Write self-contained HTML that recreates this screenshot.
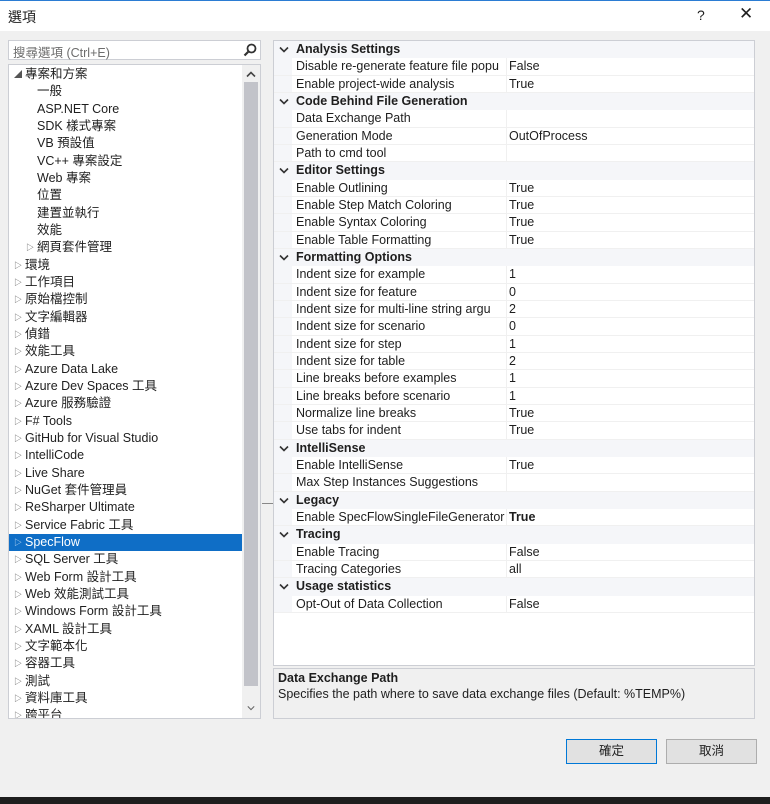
<!DOCTYPE html>
<html><head><meta charset="utf-8"><style>
*{margin:0;padding:0;box-sizing:border-box}
body{width:770px;height:804px;background:#f0f0f0;font-family:"Liberation Sans","Noto Sans CJK TC",sans-serif;font-size:12.5px;color:#1e1e1e;position:relative;overflow:hidden}
.a{position:absolute;white-space:nowrap}
#title{left:0;top:0;width:770px;height:31px;background:#fff;border-top:1px solid #2b7cd3}
#search{left:8px;top:40px;width:253px;height:20px;background:#fff;border:1px solid #ccced4}
#tree{left:8px;top:64px;width:253px;height:655px;background:#fff;border:1px solid #ccced4;overflow:hidden}
.tr{position:absolute;left:0;height:17px;line-height:17px;width:234px;white-space:nowrap}
.tr.sel{background:#0f6ec6;color:#fff}
.ar{position:absolute;left:5px;top:0;font-size:8px;color:#555}
.sel .ar{color:#cfe3f7}
#sb{left:242px;top:65px;width:18px;height:653px;background:#f0f0f0}
#thumb{left:244px;top:82px;width:14px;height:604px;background:#c2c3c9}
#grid{left:273px;top:40px;width:482px;height:626px;background:#fff;border:1px solid #ccced4;overflow:hidden}
.gr{position:absolute;left:0;width:480px;height:17.34px;line-height:17px}
.gr.cat{background:#f5f6f9;font-weight:bold}
.gr .n{position:absolute;left:22px}
.gr .v{position:absolute;left:232px;border-left:1px solid #f0f0f0;padding-left:2px;height:17px;width:248px}
.gr:not(.cat){border-bottom:1px solid #f0f0f0}
.gut{position:absolute;left:0;top:0;width:18px;height:100%;background:#f5f6f9}
.chev{position:absolute;left:5px;top:5px;width:10px;height:7px}
#desc{left:273px;top:668px;width:482px;height:51px;border:1px solid #ccced4;background:#f0f0f0;padding:2px 4px}
.btn{position:absolute;top:739px;width:91px;height:25px;border:1px solid #adadad;background:#e1e1e1;text-align:center;line-height:23px}
</style></head><body>
<svg width="0" height="0" style="position:absolute"><defs><symbol id="cv" viewBox="0 0 10 7"><path d="M1 1.5L5 5.5L9 1.5" fill="none" stroke="#333" stroke-width="1.6"/></symbol></defs></svg>
<div id="title" class="a"><span class="a" style="left:8px;top:6px;font-size:14px">選項</span><span class="a" style="left:697px;top:6px;font-size:14px">?</span><span class="a" style="left:739px;top:3px;font-size:17px">✕</span></div>
<div id="search" class="a"><span class="a" style="left:4px;top:1px;color:#6d6d6d">搜尋選項 (Ctrl+E)</span>
<svg class="a" style="left:234px;top:2px" width="14" height="14" viewBox="0 0 14 14"><circle cx="8.5" cy="5.5" r="4" fill="none" stroke="#333" stroke-width="1.8"/><path d="M5.5 8.5L1.5 12.5" stroke="#333" stroke-width="2.2"/></svg></div>
<div id="tree" class="a">
<div class="tr" style="top:1px"><span class="ar">◢</span><span style="position:absolute;left:16px">專案和方案</span></div>
<div class="tr" style="top:18px"><span style="position:absolute;left:28px">一般</span></div>
<div class="tr" style="top:36px"><span style="position:absolute;left:28px">ASP.NET Core</span></div>
<div class="tr" style="top:53px"><span style="position:absolute;left:28px">SDK 樣式專案</span></div>
<div class="tr" style="top:70px"><span style="position:absolute;left:28px">VB 預設值</span></div>
<div class="tr" style="top:88px"><span style="position:absolute;left:28px">VC++ 專案設定</span></div>
<div class="tr" style="top:105px"><span style="position:absolute;left:28px">Web 專案</span></div>
<div class="tr" style="top:122px"><span style="position:absolute;left:28px">位置</span></div>
<div class="tr" style="top:140px"><span style="position:absolute;left:28px">建置並執行</span></div>
<div class="tr" style="top:157px"><span style="position:absolute;left:28px">效能</span></div>
<div class="tr" style="top:174px"><span class="ar" style="left:17px">▷</span><span style="position:absolute;left:28px">網頁套件管理</span></div>
<div class="tr" style="top:192px"><span class="ar">▷</span><span style="position:absolute;left:16px">環境</span></div>
<div class="tr" style="top:209px"><span class="ar">▷</span><span style="position:absolute;left:16px">工作項目</span></div>
<div class="tr" style="top:226px"><span class="ar">▷</span><span style="position:absolute;left:16px">原始檔控制</span></div>
<div class="tr" style="top:244px"><span class="ar">▷</span><span style="position:absolute;left:16px">文字編輯器</span></div>
<div class="tr" style="top:261px"><span class="ar">▷</span><span style="position:absolute;left:16px">偵錯</span></div>
<div class="tr" style="top:278px"><span class="ar">▷</span><span style="position:absolute;left:16px">效能工具</span></div>
<div class="tr" style="top:296px"><span class="ar">▷</span><span style="position:absolute;left:16px">Azure Data Lake</span></div>
<div class="tr" style="top:313px"><span class="ar">▷</span><span style="position:absolute;left:16px">Azure Dev Spaces 工具</span></div>
<div class="tr" style="top:330px"><span class="ar">▷</span><span style="position:absolute;left:16px">Azure 服務驗證</span></div>
<div class="tr" style="top:348px"><span class="ar">▷</span><span style="position:absolute;left:16px">F# Tools</span></div>
<div class="tr" style="top:365px"><span class="ar">▷</span><span style="position:absolute;left:16px">GitHub for Visual Studio</span></div>
<div class="tr" style="top:382px"><span class="ar">▷</span><span style="position:absolute;left:16px">IntelliCode</span></div>
<div class="tr" style="top:400px"><span class="ar">▷</span><span style="position:absolute;left:16px">Live Share</span></div>
<div class="tr" style="top:417px"><span class="ar">▷</span><span style="position:absolute;left:16px">NuGet 套件管理員</span></div>
<div class="tr" style="top:434px"><span class="ar">▷</span><span style="position:absolute;left:16px">ReSharper Ultimate</span></div>
<div class="tr" style="top:452px"><span class="ar">▷</span><span style="position:absolute;left:16px">Service Fabric 工具</span></div>
<div class="tr sel" style="top:469px"><span class="ar">▷</span><span style="position:absolute;left:16px">SpecFlow</span></div>
<div class="tr" style="top:486px"><span class="ar">▷</span><span style="position:absolute;left:16px">SQL Server 工具</span></div>
<div class="tr" style="top:504px"><span class="ar">▷</span><span style="position:absolute;left:16px">Web Form 設計工具</span></div>
<div class="tr" style="top:521px"><span class="ar">▷</span><span style="position:absolute;left:16px">Web 效能測試工具</span></div>
<div class="tr" style="top:538px"><span class="ar">▷</span><span style="position:absolute;left:16px">Windows Form 設計工具</span></div>
<div class="tr" style="top:556px"><span class="ar">▷</span><span style="position:absolute;left:16px">XAML 設計工具</span></div>
<div class="tr" style="top:573px"><span class="ar">▷</span><span style="position:absolute;left:16px">文字範本化</span></div>
<div class="tr" style="top:590px"><span class="ar">▷</span><span style="position:absolute;left:16px">容器工具</span></div>
<div class="tr" style="top:608px"><span class="ar">▷</span><span style="position:absolute;left:16px">測試</span></div>
<div class="tr" style="top:625px"><span class="ar">▷</span><span style="position:absolute;left:16px">資料庫工具</span></div>
<div class="tr" style="top:642px"><span class="ar">▷</span><span style="position:absolute;left:16px">跨平台</span></div>
</div>
<div id="sb" class="a"></div><div id="thumb" class="a"></div>
<svg class="a" style="left:246px;top:71px" width="10" height="7" viewBox="0 0 10 7"><path d="M1 5.5L5 1.5L9 5.5" fill="none" stroke="#444" stroke-width="1.6"/></svg>
<svg class="a" style="left:247px;top:705px" width="8" height="6" viewBox="0 0 10 7"><path d="M1 1.5L5 5.5L9 1.5" fill="none" stroke="#666" stroke-width="1.3"/></svg>
<div class="a" style="left:262px;top:503px;width:11px;height:1px;background:#888"></div>
<div id="grid" class="a"><div class="gut"></div>
<div class="gr cat" style="top:0px"><svg class="chev"><use href="#cv"/></svg><span class="n">Analysis Settings</span></div>
<div class="gr" style="top:17.3px"><span class="n">Disable re-generate feature file popu</span><span class="v">False</span></div>
<div class="gr" style="top:34.7px"><span class="n">Enable project-wide analysis</span><span class="v">True</span></div>
<div class="gr cat" style="top:52px"><svg class="chev"><use href="#cv"/></svg><span class="n">Code Behind File Generation</span></div>
<div class="gr" style="top:69.4px"><span class="n">Data Exchange Path</span><span class="v"></span></div>
<div class="gr" style="top:86.7px"><span class="n">Generation Mode</span><span class="v">OutOfProcess</span></div>
<div class="gr" style="top:104px"><span class="n">Path to cmd tool</span><span class="v"></span></div>
<div class="gr cat" style="top:121.4px"><svg class="chev"><use href="#cv"/></svg><span class="n">Editor Settings</span></div>
<div class="gr" style="top:138.7px"><span class="n">Enable Outlining</span><span class="v">True</span></div>
<div class="gr" style="top:156px"><span class="n">Enable Step Match Coloring</span><span class="v">True</span></div>
<div class="gr" style="top:173.4px"><span class="n">Enable Syntax Coloring</span><span class="v">True</span></div>
<div class="gr" style="top:190.7px"><span class="n">Enable Table Formatting</span><span class="v">True</span></div>
<div class="gr cat" style="top:208px"><svg class="chev"><use href="#cv"/></svg><span class="n">Formatting Options</span></div>
<div class="gr" style="top:225.4px"><span class="n">Indent size for example</span><span class="v">1</span></div>
<div class="gr" style="top:242.8px"><span class="n">Indent size for feature</span><span class="v">0</span></div>
<div class="gr" style="top:260px"><span class="n">Indent size for multi-line string argu</span><span class="v">2</span></div>
<div class="gr" style="top:277.4px"><span class="n">Indent size for scenario</span><span class="v">0</span></div>
<div class="gr" style="top:294.8px"><span class="n">Indent size for step</span><span class="v">1</span></div>
<div class="gr" style="top:312px"><span class="n">Indent size for table</span><span class="v">2</span></div>
<div class="gr" style="top:329.4px"><span class="n">Line breaks before examples</span><span class="v">1</span></div>
<div class="gr" style="top:346.8px"><span class="n">Line breaks before scenario</span><span class="v">1</span></div>
<div class="gr" style="top:364px"><span class="n">Normalize line breaks</span><span class="v">True</span></div>
<div class="gr" style="top:381.4px"><span class="n">Use tabs for indent</span><span class="v">True</span></div>
<div class="gr cat" style="top:398.8px"><svg class="chev"><use href="#cv"/></svg><span class="n">IntelliSense</span></div>
<div class="gr" style="top:416px"><span class="n">Enable IntelliSense</span><span class="v">True</span></div>
<div class="gr" style="top:433.4px"><span class="n">Max Step Instances Suggestions</span><span class="v"></span></div>
<div class="gr cat" style="top:450.8px"><svg class="chev"><use href="#cv"/></svg><span class="n">Legacy</span></div>
<div class="gr" style="top:468px"><span class="n">Enable SpecFlowSingleFileGenerator</span><span class="v" style="font-weight:bold">True</span></div>
<div class="gr cat" style="top:485.4px"><svg class="chev"><use href="#cv"/></svg><span class="n">Tracing</span></div>
<div class="gr" style="top:502.8px"><span class="n">Enable Tracing</span><span class="v">False</span></div>
<div class="gr" style="top:520px"><span class="n">Tracing Categories</span><span class="v">all</span></div>
<div class="gr cat" style="top:537.4px"><svg class="chev"><use href="#cv"/></svg><span class="n">Usage statistics</span></div>
<div class="gr" style="top:554.8px"><span class="n">Opt-Out of Data Collection</span><span class="v">False</span></div>
<div style="position:absolute;left:0;top:572px;width:18px;height:60px;background:#fff"></div>
</div>
<div id="desc" class="a"><div style="font-weight:bold">Data Exchange Path</div><div style="margin-top:2px">Specifies the path where to save data exchange files (Default: %TEMP%)</div></div>
<div class="btn" style="left:566px;border:1px solid #0078d7">確定</div>
<div class="btn" style="left:666px">取消</div>
<div class="a" style="left:0;top:797px;width:770px;height:7px;background:#1e1e1e"></div>
</body></html>
